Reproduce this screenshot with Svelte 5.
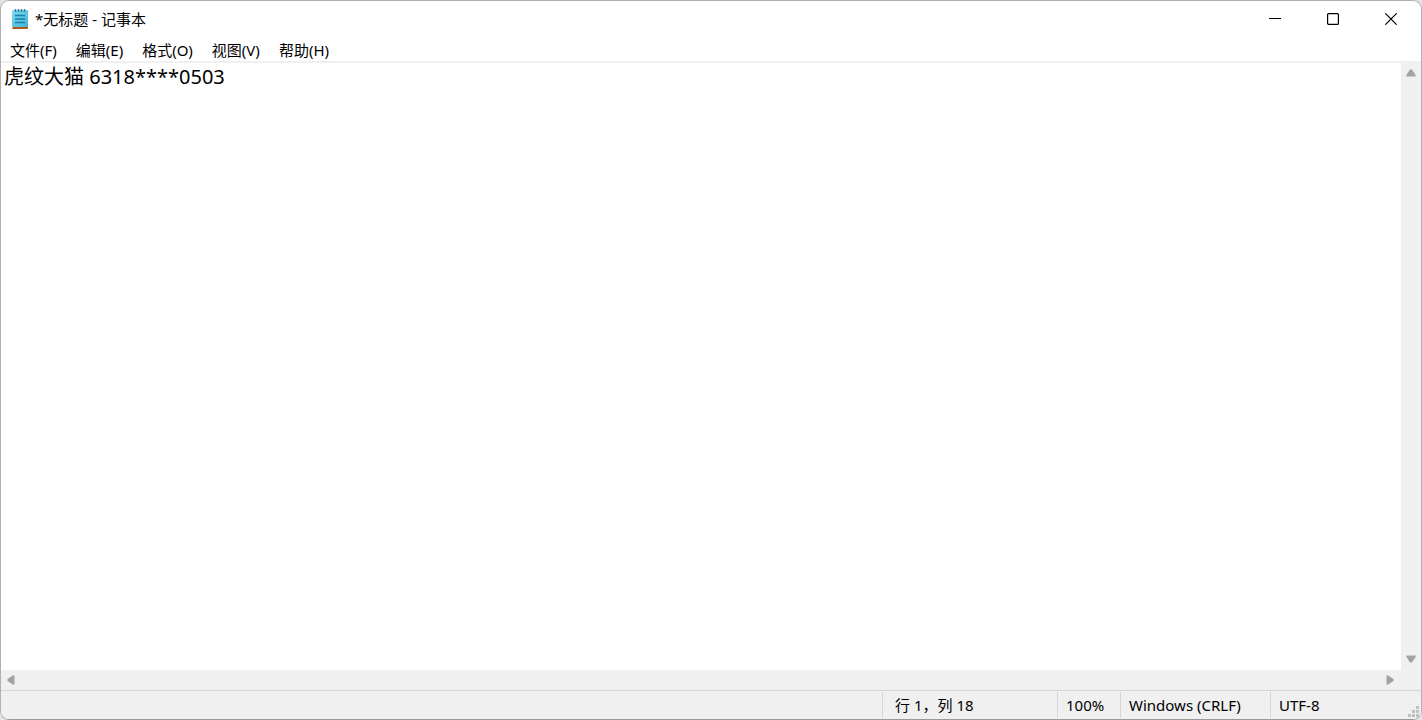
<script>
  let text = $state('虎纹大猫 6318****0503');

  const menus = ['文件(F)', '编辑(E)', '格式(O)', '视图(V)', '帮助(H)'];
</script>

<div class="notepad">
  <header class="titlebar">
    <svg class="app-icon" width="18" height="22" viewBox="0 0 18 22" aria-hidden="true">
      <defs>
        <linearGradient id="paper" x1="0" y1="0" x2="1" y2="1">
          <stop offset="0" stop-color="#80d9ee" />
          <stop offset="1" stop-color="#3db4da" />
        </linearGradient>
      </defs>
      <rect x="1" y="17" width="16" height="4" rx="1" fill="#b0561f" />
      <rect x="1" y="18" width="1" height="2" fill="#e6c9a8" />
      <rect x="1" y="2" width="16" height="17" rx="1" fill="url(#paper)" />
      <path d="M4.5 1v3M7.5 1v3M10.5 1v3M13.5 1v3" stroke="#3a7f98" stroke-width="1.4" />
      <path d="M4 7.5h10M4 11h10M4 14.5h10" stroke="#1a7fa6" stroke-width="1.4" />
    </svg>
    <h1>*无标题 - 记事本</h1>
    <div class="window-controls">
      <button type="button" aria-label="最小化">
        <svg width="12" height="12" viewBox="0 0 12 12"><path d="M0 5.5h12" /></svg>
      </button>
      <button type="button" aria-label="最大化">
        <svg width="12" height="12" viewBox="0 0 12 12">
          <rect x="0.6" y="0.6" width="10.8" height="10.8" rx="1" />
        </svg>
      </button>
      <button type="button" aria-label="关闭">
        <svg width="12" height="12" viewBox="0 0 12 12"><path d="M0.3 0.3l11.4 11.4M11.7 0.3L0.3 11.7" /></svg>
      </button>
    </div>
  </header>

  <nav class="menubar">
    {#each menus as menu}
      <button type="button">{menu}</button>
    {/each}
  </nav>

  <main class="editor">
    <textarea bind:value={text} aria-label="文本编辑器" wrap="off" spellcheck="false"></textarea>
    <div class="scrollbar vertical">
      <button type="button" aria-label="向上滚动">
        <svg width="10" height="8" viewBox="0 0 10 8"><path d="M4 0.5h2L9.7 6.3Q10 7.5 9 7.5H1Q0 7.5 0.3 6.3z" /></svg>
      </button>
      <button type="button" aria-label="向下滚动">
        <svg width="10" height="8" viewBox="0 0 10 8"><path d="M4 7.5h2L9.7 1.7Q10 0.5 9 0.5H1Q0 0.5 0.3 1.7z" /></svg>
      </button>
    </div>
    <div class="scrollbar horizontal">
      <button type="button" aria-label="向左滚动">
        <svg width="8" height="10" viewBox="0 0 8 10"><path d="M0.5 4v2L6.3 9.7Q7.5 10 7.5 9V1Q7.5 0 6.3 0.3z" /></svg>
      </button>
      <button type="button" aria-label="向右滚动">
        <svg width="8" height="10" viewBox="0 0 8 10"><path d="M7.5 4v2L1.7 9.7Q0.5 10 0.5 9V1Q0.5 0 1.7 0.3z" /></svg>
      </button>
    </div>
  </main>

  <footer class="statusbar">
    <span class="position">行 1，列 18</span>
    <span class="zoom">100%</span>
    <span class="line-ending">Windows (CRLF)</span>
    <span class="encoding">UTF-8</span>
    <svg class="grip" width="11" height="11" viewBox="0 0 11 11" aria-hidden="true">
      <path d="M8 0h3v3h-3zM4 4h3v3h-3zM8 4h3v3h-3zM0 8h3v3h-3zM4 8h3v3h-3zM8 8h3v3h-3z" />
    </svg>
  </footer>
</div>

<style>
  :global(body) {
    background: #e4e4e4;
  }

  .notepad {
    display: flex;
    flex-direction: column;
    box-sizing: border-box;
    height: 100vh;
    border: 1px solid #b0b0b0;
    border-bottom-color: #999;
    border-radius: 9px;
    overflow: hidden;
    background: #fff;
    color: #000;
    font: 15px/20px 'Noto Sans', 'Noto Sans CJK SC', sans-serif;
  }

  button {
    margin: 0;
    padding: 0;
    border: none;
    background: none;
    color: inherit;
    font: inherit;
  }

  .titlebar {
    display: flex;
    align-items: center;
    height: 36px;
    padding-left: 10px;
  }

  .titlebar h1 {
    flex: 1;
    margin: 0 0 0 6px;
    font-size: 15px;
    font-weight: 400;
    line-height: 20px;
  }

  .window-controls {
    display: flex;
    height: 100%;
    padding-right: 1px;
  }

  .window-controls button {
    display: grid;
    place-items: center;
    width: 58px;
  }

  .window-controls svg {
    fill: none;
    stroke: #000;
    stroke-width: 1.2;
  }

  .menubar {
    display: flex;
    gap: 1px;
    height: 24px;
    border-bottom: 2px solid #f0f0f0;
  }

  .menubar button {
    padding: 2px 9px 0;
  }

  .menubar button:hover {
    background: #e5f3ff;
  }

  .editor {
    flex: 1;
    display: grid;
    grid-template-columns: 1fr 20px;
    grid-template-rows: 1fr 20px;
    min-height: 0;
    background: #f0f0f0;
  }

  textarea {
    margin: 0;
    padding: 0 3px;
    border: none;
    outline: none;
    resize: none;
    overflow: hidden;
    background: #fff;
    color: #000;
    font: 20px/27px 'Noto Sans', 'Noto Sans CJK SC', sans-serif;
  }

  .scrollbar {
    display: flex;
    justify-content: space-between;
  }

  .scrollbar.vertical {
    flex-direction: column;
    padding-bottom: 1px;
  }

  .scrollbar.horizontal {
    padding-right: 1px;
  }

  .scrollbar button {
    display: grid;
    place-items: center;
    width: 20px;
    height: 20px;
  }

  .scrollbar svg {
    fill: #a3a3a3;
  }

  .statusbar {
    position: relative;
    display: flex;
    justify-content: flex-end;
    height: 28px;
    border-top: 1px solid #d7d7d7;
    background: #f0f0f0;
  }

  .statusbar span {
    box-sizing: border-box;
    margin: 1px 0;
    padding-left: 8px;
    border-left: 1px solid #d7d7d7;
    line-height: 26px;
    white-space: nowrap;
  }

  .statusbar .position {
    width: 175px;
    padding-left: 12px;
  }

  .statusbar .zoom {
    width: 63px;
  }

  .statusbar .line-ending {
    width: 150px;
  }

  .statusbar .encoding {
    width: 151px;
  }

  .grip {
    position: absolute;
    right: 2px;
    bottom: 2px;
    fill: #bfbfbf;
  }
</style>
